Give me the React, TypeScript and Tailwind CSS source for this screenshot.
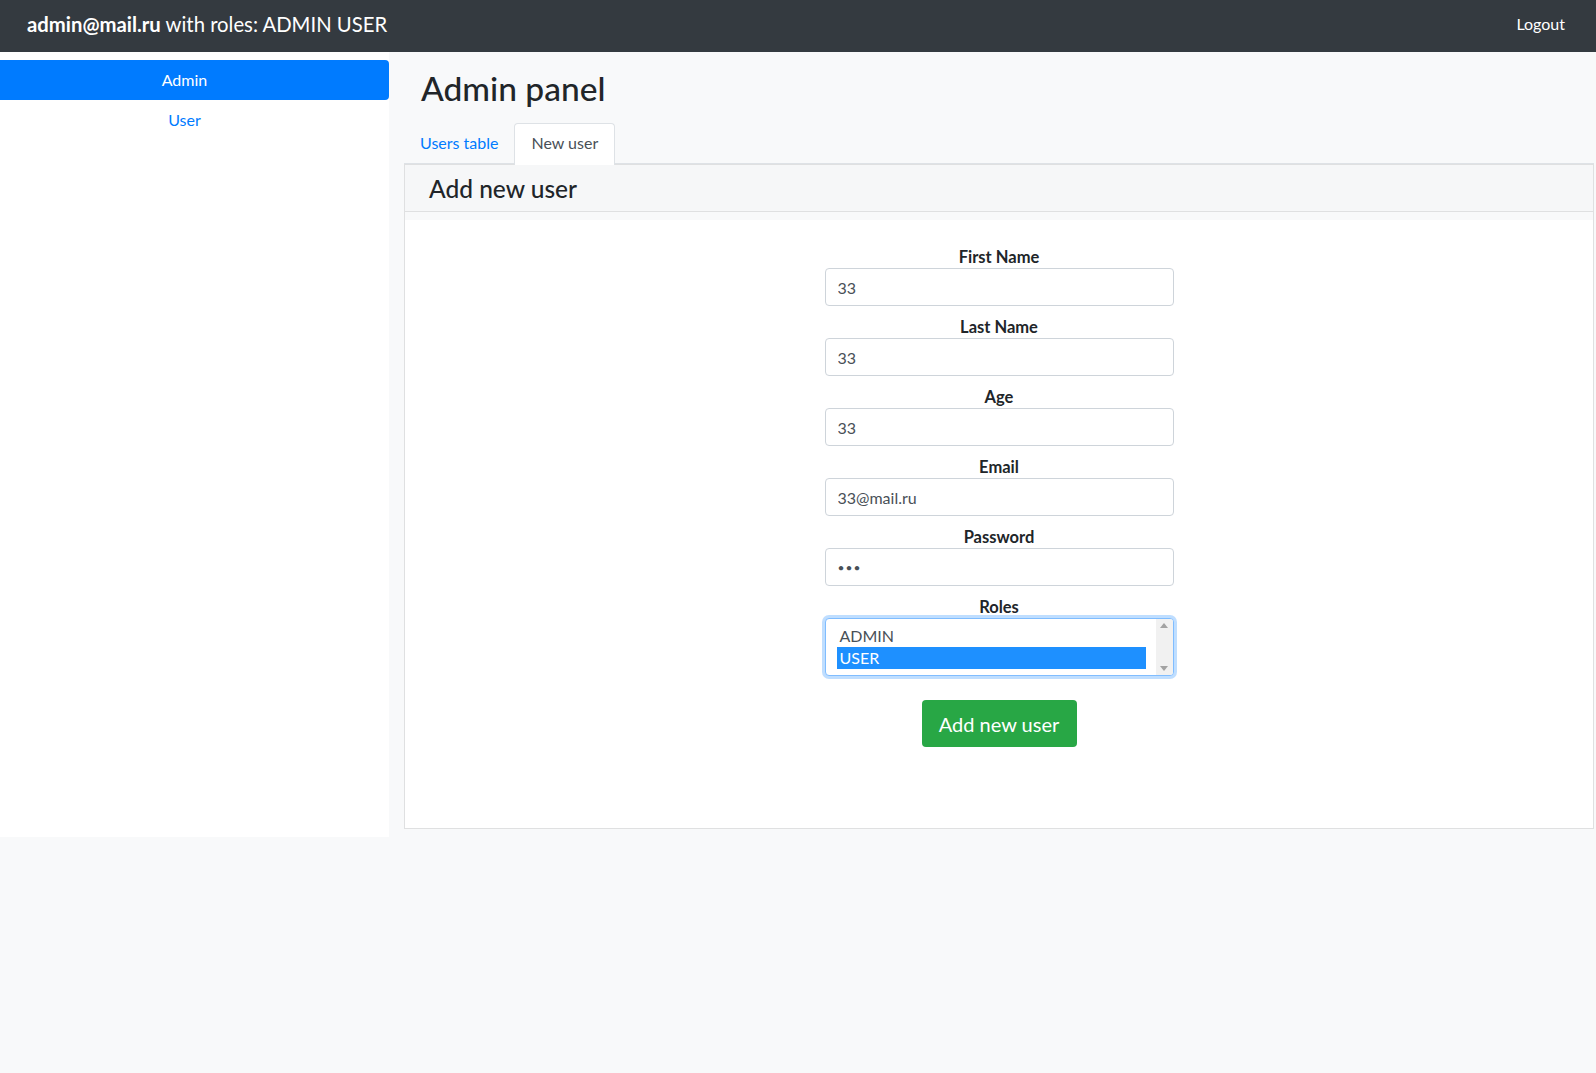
import React from "react";

const fields = [
  { label: "First Name", value: "33", type: "text" },
  { label: "Last Name", value: "33", type: "text" },
  { label: "Age", value: "33", type: "number" },
  { label: "Email", value: "33@mail.ru", type: "email" },
  { label: "Password", value: "333", type: "password" },
];

const Field: React.FC<{ label: string; value: string; type: string }> = ({
  label,
  value,
  type,
}) => {
  const isPassword = type === "password";
  return (
    <div className="flex flex-col items-center mb-2">
      <label className="h-6 leading-6 pt-[1px] text-[16.5px] font-bold text-[#212529]">
        {label}
      </label>
      <input
        readOnly
        type={isPassword ? "password" : "text"}
        value={value}
        className={`w-[349px] h-[38px] px-3 border border-[#ced4da] rounded-[4px] bg-white text-[#495057] outline-none ${
          isPassword ? "text-[12px] tracking-[1px]" : "text-[16px]"
        }`}
      />
    </div>
  );
};

const RolesSelect: React.FC = () => {
  const roles = ["ADMIN", "USER"];
  const selected = "USER";
  return (
    <div className="flex flex-col items-center">
      <label className="h-6 leading-6 pt-[1px] text-[16.5px] font-bold text-[#212529]">
        Roles
      </label>
      <div className="w-[349px] h-[58px] border border-[#80bdff] rounded-[4px] bg-white shadow-[0_0_0_3px_rgba(0,123,255,0.25)] flex overflow-hidden">
        <div className="flex-1 pl-[11px] pt-[6px]">
          {roles.map((role) => (
            <div
              key={role}
              className={`h-[22px] leading-[22px] pl-[3px] text-[16px] ${
                role === selected
                  ? "bg-[#1e90ff] text-white"
                  : "text-[#495057]"
              }`}
            >
              {role}
            </div>
          ))}
        </div>
        <div className="w-[17px] ml-[10px] bg-[#f1f1f1] flex flex-col items-center justify-between py-[4px]">
          <svg width="8" height="5" viewBox="0 0 8 5">
            <path d="M0 5 L4 0 L8 5 Z" fill="#a3a3a3" />
          </svg>
          <svg width="8" height="5" viewBox="0 0 8 5">
            <path d="M0 0 L4 5 L8 0 Z" fill="#a3a3a3" />
          </svg>
        </div>
      </div>
    </div>
  );
};

export default function App() {
  return (
    <div className="min-h-screen bg-[#f8f9fa] font-['Lato','Noto_Sans',sans-serif] text-[#212529]">
      <nav className="h-[52px] bg-[#343a40] flex items-center justify-between pl-[27px] pr-[31px] pb-[4px] text-white">
        <div className="text-[20.3px]">
          <span className="font-bold">admin@mail.ru</span> with roles: ADMIN
          USER
        </div>
        <a className="text-[16px] text-white">Logout</a>
      </nav>

      <div className="flex">
        <aside className="w-[389px] h-[785px] bg-white pt-2">
          <div className="h-10 flex items-center justify-center pr-[20px] bg-[#007bff] text-white text-[16px] rounded-r-[4px]">
            Admin
          </div>
          <div className="h-10 flex items-center justify-center pr-[20px] text-[#007bff] text-[16px]">
            User
          </div>
        </aside>

        <main className="flex-1 pl-[15px] pr-[2px]">
          <h1 className="ml-[17px] mt-[15px] mb-[14px] text-[33.5px] leading-[42px] font-medium">
            Admin panel
          </h1>

          <div className="flex border-b border-[#dee2e6] h-[41px]">
            <a className="px-4 h-[40px] flex items-center text-[16px] text-[#007bff]">
              Users table
            </a>
            <a className="px-4 h-[42px] pb-[3px] flex items-center text-[16px] text-[#495057] bg-white border border-b-0 border-[#dee2e6] rounded-t-[4px]">
              New user
            </a>
          </div>

          <div className="border border-[#dfe0e1] bg-[#f8f9fa]">
            <div className="h-[47px] flex items-center pt-[2px] px-[24px] bg-[#f6f7f8] border-b border-[#dfe0e1]">
              <h4 className="text-[24.5px] font-medium">Add new user</h4>
            </div>
            <div className="h-2" />
            <div className="bg-white pt-[24px] pb-[81px] flex flex-col items-center">
              {fields.map((f) => (
                <Field
                  key={f.label}
                  label={f.label}
                  value={f.value}
                  type={f.type}
                />
              ))}
              <RolesSelect />
              <button className="mt-6 w-[155px] h-[47px] bg-[#28a745] text-white text-[20px] rounded-[4px]">
                Add new user
              </button>
            </div>
          </div>
        </main>
      </div>
    </div>
  );
}
